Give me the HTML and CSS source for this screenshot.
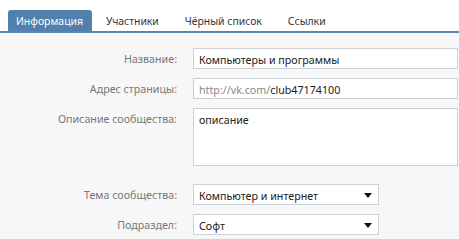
FILE: index.html
```html
<!DOCTYPE html>
<html lang="ru">
<head>
  <meta charset="UTF-8" />
  <title>Управление сообществом</title>
  <link rel="stylesheet" href="styles.css">
</head>
<body>

<!-- Tabs -->
<div class="tabs">
  <a class="tab active">Информация</a>
  <a class="tab">Участники</a>
  <a class="tab">Чёрный список</a>
  <a class="tab">Ссылки</a>
</div>

<!-- Settings form -->
<div class="form">
  <label class="label">Название:</label>
  <div class="field wide">Компьютеры и программы</div>

  <label class="label">Адрес страницы:</label>
  <div class="field wide"><span class="prefix">http://vk.com/</span>club47174100</div>

  <label class="label">Описание сообщества:</label>
  <div class="field wide area">описание</div>

  <label class="label spaced">Тема сообщества:</label>
  <div class="field select spaced">Компьютер и интернет<span class="arrow"></span></div>

  <label class="label">Подраздел:</label>
  <div class="field select">Софт<span class="arrow"></span></div>
</div>

</body>
</html>
```

FILE: styles.css
```css
body {
  margin: 0;
  font-family: "Noto Sans", Tahoma, sans-serif;
  font-size: 10.7px;
  background-color: #f7f7f7;
  overflow: hidden;
}

.tabs {
  display: flex;
  gap: 2px;
  padding: 10px 0 0 8px;
  background: white;
  border-bottom: 2px solid #5b85b1;
  font-size: 10.4px;
}

.tab {
  padding: 5px 12px 4px;
  color: #333;
  border-radius: 3px 3px 0 0;
  line-height: 12px;
}

.tab.active {
  padding: 5px 9px 4px 8px;
  background-color: #5080ad;
  color: white;
}

.form {
  display: grid;
  grid-template-columns: 177px 265px;
  column-gap: 16px;
  row-gap: 9px;
  padding-top: 15px;
}

.label {
  text-align: right;
  color: #777;
  padding-top: 5px;
  line-height: 12px;
}

.field {
  height: 21px;
  box-sizing: border-box;
  border: 1px solid #c9d0d8;
  background: white;
  color: #222;
  padding: 5px 5px 3px;
  line-height: 12px;
}

.prefix {
  color: #888;
}

.area {
  height: 58px;
}

.spaced {
  margin-top: 9px;
}

.select {
  width: 186px;
  position: relative;
}

.arrow {
  position: absolute;
  right: 6px;
  top: 8px;
  border-left: 4px solid transparent;
  border-right: 4px solid transparent;
  border-top: 5px solid #111;
}
```
